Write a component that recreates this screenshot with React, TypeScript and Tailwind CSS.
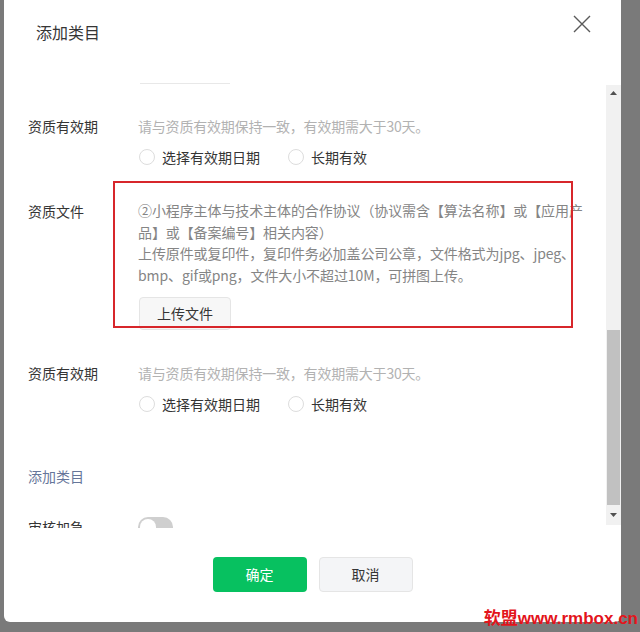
const Radio = ({ label }: { label: string }) => (
  <label className="flex items-center">
    <span className="ml-[1px] h-4 w-4 rounded-full border border-[#dddddd] bg-white" />
    <span className="ml-[7px] text-[14px] leading-[22px] text-[#353535]">{label}</span>
  </label>
)

const ValidityRow = () => (
  <div className="flex">
    <div className="w-[110px] shrink-0 text-[14px] leading-[22px] text-[#353535]">资质有效期</div>
    <div>
      <p className="text-[14px] leading-[22px] tracking-[-0.2px] text-[#b2b2b2]">
        请与资质有效期保持一致，有效期需大于30天。
      </p>
      <div className="mt-[9px] flex gap-[27px]">
        <Radio label="选择有效期日期" />
        <Radio label="长期有效" />
      </div>
    </div>
  </div>
)

const ScrollBar = () => (
  <div className="w-[15px] shrink-0 pt-[21px] pb-[3px]">
    <div className="flex h-[440px] flex-col bg-[#f1f1f1]">
      <div className="flex h-[15px] items-center justify-center">
        <svg width="7" height="4" viewBox="0 0 7 4"><path d="M3.5 0L7 4H0z" fill="#505050" /></svg>
      </div>
      <div className="h-[230px]" />
      <div className="mx-[1px] h-[175px] bg-[#c1c1c1]" />
      <div className="flex h-[20px] items-center justify-center">
        <svg width="7" height="4" viewBox="0 0 7 4"><path d="M0 0h7L3.5 4z" fill="#505050" /></svg>
      </div>
    </div>
  </div>
)

export default function App() {
  return (
    <div className="relative h-[632px] w-[640px] overflow-hidden bg-[#7a7a7a] pl-[4px] font-['Noto_Sans_CJK_SC',sans-serif]">
      <div className="flex w-[617px] flex-col rounded-b-[6px] bg-white">
        {/* header */}
        <div className="flex h-16 justify-between pl-8 pr-[30px]">
          <h2 className="mt-[21px] text-[16px] leading-[22px] text-[#353535]">添加类目</h2>
          <button className="mt-[15px] h-[18px] w-[18px]">
            <svg width="18" height="18" viewBox="0 0 18 18" fill="none" stroke="#5a5a5a" strokeWidth="1.4">
              <path d="M1 1l16 16M17 1L1 17" />
            </svg>
          </button>
        </div>

        {/* body */}
        <div className="flex h-[464px]">
          <div className="flex-1 overflow-hidden pl-6">
            <div className="ml-[112px] h-[20px] w-[90px] border-b border-[#e8e8e8]" />

            <div className="mt-[31px]">
              <ValidityRow />
            </div>

            <div className="relative mt-[32px] flex">
              <div className="w-[110px] shrink-0 text-[14px] leading-[22px] text-[#353535]">资质文件</div>
              <div>
                <div className="whitespace-nowrap text-[14px] leading-[21.5px] tracking-[-0.1px] text-[#858585]">
                  <p>②小程序主体与技术主体的合作协议（协议需含【算法名称】或【应用产</p>
                  <p>品】或【备案编号】相关内容）</p>
                  <p>上传原件或复印件，复印件务必加盖公司公章，文件格式为jpg、jpeg、</p>
                  <p>bmp、gif或png，文件大小不超过10M，可拼图上传。</p>
                </div>
                <button className="ml-[1px] mt-[11px] h-[33px] w-[92px] rounded-[4px] border border-[#e5e5e5] bg-[#f7f7f7] text-[14px] text-[#353535]">
                  上传文件
                </button>
              </div>
              <div className="pointer-events-none absolute left-[85px] top-[-19px] h-[147px] w-[460px] border-2 border-[#d7262b]" />
            </div>

            <div className="mt-[32px]">
              <ValidityRow />
            </div>

            <div className="mt-[50px] text-[14px] leading-[22px] text-[#66769a]">添加类目</div>

            <div className="mt-[29px] flex">
              <div className="w-[110px] shrink-0 text-[14px] leading-[22px] text-[#353535]">审核加急</div>
              <div className="mt-[1px] flex h-[20px] w-[35px] items-center rounded-full bg-[#cfcfcf] px-[2px]">
                <span className="h-4 w-4 rounded-full bg-white" />
              </div>
            </div>
          </div>
          <ScrollBar />
        </div>

        {/* footer */}
        <div className="flex justify-center gap-3 pt-[29px] pb-[30px]">
          <button className="h-[35px] w-[94px] rounded-[4px] bg-[#07c160] text-[14px] text-white">确定</button>
          <button className="h-[35px] w-[94px] rounded-[4px] border border-[#e5e5e5] bg-[#f4f5f7] text-[14px] text-[#353535]">
            取消
          </button>
        </div>
      </div>

      <div className="absolute bottom-[4px] right-[2px] font-['Liberation_Sans','Noto_Sans_CJK_SC',sans-serif] text-[17px] font-bold leading-[18px] text-[#e3141b]">
        软盟www.rmbox.cn
      </div>
    </div>
  )
}
